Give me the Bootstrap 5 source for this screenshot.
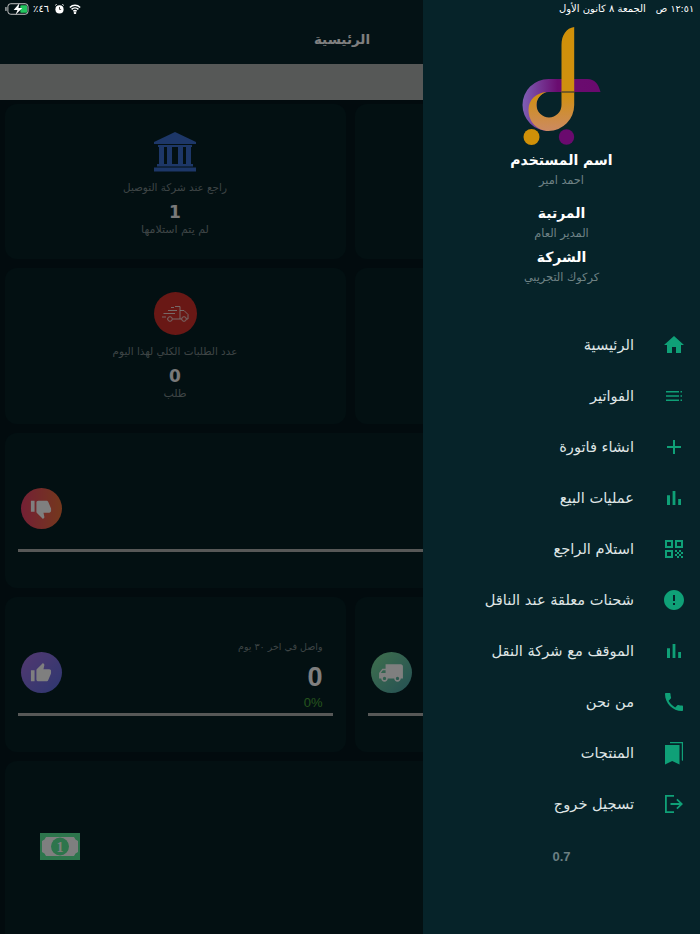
<!DOCTYPE html>
<html lang="ar" dir="rtl">
<head>
  <meta charset="UTF-8" />
  <meta name="viewport" content="width=device-width, initial-scale=1.0"/>
  <title>الرئيسية</title>
  <link href="https://cdn.jsdelivr.net/npm/bootstrap@5.3.0/dist/css/bootstrap.min.css" rel="stylesheet" />
  <style>
    html, body { height: 100%; }
    body {
      width: 700px;
      height: 934px;
      overflow: hidden;
      position: relative;
      background-color: #04171c;
      font-family: "DejaVu Sans", sans-serif;
    }
    .page-title {
      height: 64px;
      background-color: #08242a;
      color: #fff;
      font-size: 13.5px;
      font-weight: 700;
      padding: 29px 16px 0 0;
      line-height: 20px;
      text-align: center;
    }
    .search-strip { height: 36px; background-color: #adb0ae; }
    .stat-rows { --bs-gutter-y: 9px; margin: -5px 0 0; }
    .stat-rows > * { padding: 0 4.5px; }
    .tile {
      background-color: #062025;
      border-radius: 12px;
      height: 155.25px;
      text-align: center;
    }
    .tile-tall { height: 190px; padding-bottom: 20px; }
    .tile-label { font-size: 10.4px; line-height: 14px; color: #7d8a8b; }
    .tile-num { font-size: 17px; font-weight: 700; line-height: 22px; color: #f2f2f2; margin-top: 7px; }
    .tile-sub { font-size: 11px; line-height: 14px; color: #7d8a8b; }
    .bank-box { padding-top: 28px; height: 76px; }
    .truck-box { padding-top: 24px; height: 76px; }
    .round-ico {
      width: 41px;
      height: 41px;
      border-radius: 50%;
      flex: none;
    }
    .round-lg { width: 43px; height: 43px; }
    .bg-red { background-color: #d2302b; }
    .bg-down { background: linear-gradient(90deg, #e8406a, #e8703a); }
    .bg-up { background: linear-gradient(135deg, #a672e0, #5a6ee0); }
    .bg-ship { background: linear-gradient(135deg, #7ee09a, #4aa0a8); }
    .metric-body { height: 84px; padding: 0 10px 0 3px; margin-top: 34px; box-sizing: content-box; }
    .metric-wrap { padding: 0 13px; text-align: right; overflow: hidden; }
    .metric-text { margin-top: 5px; }
    .metric-label { font-size: 9.5px; line-height: 14px; color: #7d8a8b; }
    .metric-num { font-family: "Liberation Sans", sans-serif; font-size: 27px; font-weight: 700; line-height: 34px; color: #fff; margin-top: 6px; }
    .metric-pct { font-family: "Liberation Sans", sans-serif; font-size: 13px; line-height: 16px; color: #4ca83a; margin-top: 1px; }
    .metric-bar { height: 3px; background-color: #aeb0ae; margin-top: -2px; }
    .bill-ico { margin: auto 0 auto 0; margin-left: 35px; }
    .dim-layer { position: absolute; inset: 0; background-color: rgba(0, 0, 0, .5); }
    .side-panel {
      position: absolute;
      top: 0;
      right: 0;
      bottom: 0;
      width: 277px;
      background-color: #062329;
      padding-top: 20px;
      text-align: center;
    }
    .who-title { font-size: 14px; font-weight: 700; line-height: 20px; color: #fff; }
    .who-sub { font-size: 11.3px; line-height: 16px; color: #6f8285; margin-top: 3px; }
    .who-gap-lg { margin-top: 14px; }
    .who-gap-sm { margin-top: 5px; }
    .side-menu { margin-top: 33px; }
    .side-link {
      height: 51.1px;
      padding: 0 14px 0 0;
      color: #dfe5e5;
      font-size: 14.6px;
      gap: 28px;
    }
    .side-link:hover { color: #fff; }
    .side-link svg { width: 24px; height: 24px; flex: none; fill: #0fa077; }
    .build-no { font-family: "Liberation Sans", sans-serif; font-size: 13px; font-weight: 700; line-height: 20px; color: #6b7f82; margin-top: 17px; }
    .status-row {
      position: absolute;
      top: 0;
      left: 0;
      right: 0;
      height: 18px;
      padding: 0 6px 0 5px;
      color: #fff;
      font-size: 10px;
      line-height: 18px;
    }
    .status-date { gap: 10px; }
    .status-time { font-size: 9.5px; }
    .status-icons { gap: 4px; }
    .status-alarm { margin-left: 2px; }
    .status-wifi { margin-left: 1px; }
  </style>
</head>
<body>
  <div class="page-title">الرئيسية</div>
  <div class="search-strip"></div>

  <div class="row stat-rows">
    <div class="col-6"><div class="tile"></div></div>
    <div class="col-6">
      <div class="tile">
        <div class="bank-box">
          <svg width="44" height="40" viewBox="0 0 44 40" fill="#3a6fd0">
            <path d="M22 0 43 10v2H1v-2z"/><rect x="5" y="13" width="34" height="2"/>
            <rect x="6" y="15" width="5" height="17"/><rect x="14" y="15" width="5" height="17"/><rect x="25" y="15" width="5" height="17"/><rect x="33" y="15" width="5" height="17"/>
            <rect x="4" y="32" width="36" height="2.5"/><rect x="1" y="35.5" width="42" height="4"/>
          </svg>
        </div>
        <div class="tile-label">راجع عند شركة التوصيل</div>
        <div class="tile-num">1</div>
        <div class="tile-sub">لم يتم استلامها</div>
      </div>
    </div>

    <div class="col-6"><div class="tile"></div></div>
    <div class="col-6">
      <div class="tile">
        <div class="truck-box">
          <div class="round-ico round-lg bg-red d-inline-flex align-items-center justify-content-center">
            <svg width="27" height="16" viewBox="0 0 27 16" fill="none" stroke="#f2e4e2" stroke-width=".9">
              <path d="M13 .5h5V13M18 4.500h4l4 4V13h-1.800M19.700 13h-9M5.800 13H5"/>
              <circle cx="8" cy="13" r="2.300"/><circle cx="22" cy="13" r="2.300"/>
              <path d="M9 1.500h3M6 4.500h9M1.500 7.500H13M0 11h4"/>
            </svg>
          </div>
        </div>
        <div class="tile-label">عدد الطلبات الكلي لهذا اليوم</div>
        <div class="tile-num">0</div>
        <div class="tile-sub">طلب</div>
      </div>
    </div>

    <div class="col-12">
      <div class="tile metric-wrap">
        <div class="metric-body d-flex align-items-center justify-content-end">
          <div class="round-ico bg-down d-flex align-items-center justify-content-center">
            <svg width="22" height="22" viewBox="0 0 24 24" fill="#fff"><path transform="translate(24 0) scale(-1 1)" d="M15 3H6c-.83 0-1.54.5-1.84 1.220l-3.020 7.050c-.09.23-.14.47-.14.730v2c0 1.100.9 2 2 2h6.310l-.95 4.570-.03.32c0 .41.17.79.44 1.060L9.830 23l6.590-6.590c.36-.36.58-.86.58-1.410V5c0-1.100-.9-2-2-2zm4 0v12h4V3h-4z"/></svg>
          </div>
        </div>
        <div class="metric-bar"></div>
      </div>
    </div>

    <div class="col-6">
      <div class="tile metric-wrap">
        <div class="metric-body d-flex align-items-center justify-content-end">
          <div class="round-ico bg-ship d-flex align-items-center justify-content-center">
            <svg width="26" height="26" viewBox="0 0 24 24" fill="#fff"><path transform="translate(24 0) scale(-1 1)" d="M20 8h-3V4H3c-1.100 0-2 .9-2 2v11h2c0 1.660 1.340 3 3 3s3-1.340 3-3h6c0 1.660 1.340 3 3 3s3-1.340 3-3h2v-5l-3-4zM6 18.500c-.83 0-1.500-.67-1.500-1.500s.67-1.500 1.500-1.500 1.500.67 1.500 1.500-.67 1.500-1.500 1.500zm13.500-9 1.960 2.500H17V9.500h2.500zM18 18.500c-.83 0-1.500-.67-1.500-1.500s.67-1.500 1.500-1.500 1.500.67 1.500 1.500-.67 1.500-1.500 1.500z"/></svg>
          </div>
        </div>
        <div class="metric-bar"></div>
      </div>
    </div>
    <div class="col-6">
      <div class="tile metric-wrap">
        <div class="metric-body d-flex align-items-center justify-content-between">
          <div class="metric-text">
            <div class="metric-label">واصل في اخر ٣٠ يوم</div>
            <div class="metric-num">0</div>
            <div class="metric-pct" dir="ltr">0%</div>
          </div>
          <div class="round-ico bg-up d-flex align-items-center justify-content-center">
            <svg width="22" height="22" viewBox="0 0 24 24" fill="#fff"><path d="M1 21h4V9H1v12zm22-11c0-1.100-.9-2-2-2h-6.310l.95-4.570.03-.32c0-.41-.17-.79-.44-1.060L14.170 1 7.590 7.590C7.220 7.950 7 8.450 7 9v10c0 1.100.9 2 2 2h9c.83 0 1.540-.5 1.800-1.220l3.020-7.050c.08-.23.13-.47.13-.73v-2z"/></svg>
          </div>
        </div>
        <div class="metric-bar"></div>
      </div>
    </div>

    <div class="col-12">
      <div class="tile tile-tall d-flex justify-content-end">
        <svg class="bill-ico" width="40" height="27" viewBox="0 0 40 27">
          <rect width="40" height="27" fill="#5aea98"/>
          <path d="M6 4h28l1.500 2.500L38 8v11l-2.500 1.500L34 23H6l-1.500-2.500L2 19V8l2.500-1.500z" fill="#fff"/>
          <circle cx="20" cy="13.500" r="9" fill="#5aea98"/>
          <text x="20" y="18.500" text-anchor="middle" font-family="Liberation Serif" font-weight="700" font-size="14" fill="#fff">1</text>
        </svg>
      </div>
    </div>
  </div>

  <div class="dim-layer"></div>

  <aside class="side-panel">
    <svg class="d-block mx-auto" width="100" height="130" viewBox="511.500 20 100 130">
      <defs>
        <linearGradient id="logoPurple" x1="0" x2="1" y1="0" y2="0">
          <stop offset="0" stop-color="#7f5fb5"/><stop offset=".45" stop-color="#6a0c70"/><stop offset="1" stop-color="#6a0a6e"/>
        </linearGradient>
        <linearGradient id="logoGold" x1="0" x2="0" y1="0" y2="1">
          <stop offset="0" stop-color="#d09008"/><stop offset=".65" stop-color="#d09010"/><stop offset="1" stop-color="#cc8a62"/>
        </linearGradient>
      </defs>
      <path d="M600 92C598 84 594 79 587 79H548A26 26 0 0 0 548 131V118A12.500 12.500 0 0 1 536 105A12.500 12.500 0 0 1 548 92z" fill="url(#logoPurple)"/>
      <path d="M573.700 27C566 28 561 35 561 45V105A12.500 12.500 0 0 1 536 105C536 99 540 94 546 92C536 93 528 99 528 110C528 122 537 131 548 131A26 26 0 0 0 573.700 105z" fill="url(#logoGold)"/>
      <path d="M561 92h13" stroke="#3a3a30" stroke-width="1.200"/>
      <circle cx="531" cy="137" r="8" fill="#d09008"/>
      <circle cx="566" cy="137" r="7.700" fill="#6a0a6e"/>
    </svg>
    <div class="who-title">اسم المستخدم</div>
    <div class="who-sub">احمد امير</div>
    <div class="who-title who-gap-lg">المرتبة</div>
    <div class="who-sub">المدير العام</div>
    <div class="who-title who-gap-sm">الشركة</div>
    <div class="who-sub">كركوك التجريبي</div>

    <nav class="nav flex-column side-menu">
      <a class="nav-link side-link d-flex align-items-center" href="#">
        <svg viewBox="0 0 24 24"><path d="M10 20v-6h4v6h5v-8h3L12 3 2 12h3v8z"/></svg>الرئيسية</a>
      <a class="nav-link side-link d-flex align-items-center" href="#">
        <svg viewBox="0 0 24 24"><path d="M4 7h13v1.500H4zM4 11.200h13v1.500H4zM4 15.500h13v1.500H4zM18.500 7h1.500v1.500h-1.500zM18.500 11.200h1.500v1.500h-1.500zM18.500 15.500h1.500v1.500h-1.500z"/></svg>الفواتير</a>
      <a class="nav-link side-link d-flex align-items-center" href="#">
        <svg viewBox="0 0 24 24"><path d="M19 13h-6v6h-2v-6H5v-2h6V5h2v6h6v2z"/></svg>انشاء فاتورة</a>
      <a class="nav-link side-link d-flex align-items-center" href="#">
        <svg viewBox="0 0 24 24"><path d="M5 9.200h3V19H5zM10.600 5h2.800v14h-2.800zm5.600 8H19v6h-2.800z"/></svg>عمليات البيع</a>
      <a class="nav-link side-link d-flex align-items-center" href="#">
        <svg viewBox="0 0 24 24"><path d="M3 3h8v8H3zm2 2v4h4V5zM13 3h8v8h-8zm2 2v4h4V5zM3 13h8v8H3zm2 2v4h4v-4zM13 13h2v2h-2zM17 13h2v2h-2zM15 15h2v2h-2zM19 15h2v2h-2zM13 17h2v2h-2zM17 17h2v2h-2zM15 19h2v2h-2zM19 19h2v2h-2z"/></svg>استلام الراجع</a>
      <a class="nav-link side-link d-flex align-items-center" href="#">
        <svg viewBox="0 0 24 24"><path d="M12 2C6.480 2 2 6.480 2 12s4.480 10 10 10 10-4.480 10-10S17.520 2 12 2zm1 15h-2v-2h2v2zm0-4h-2V7h2v6z"/></svg>شحنات معلقة عند الناقل</a>
      <a class="nav-link side-link d-flex align-items-center" href="#">
        <svg viewBox="0 0 24 24"><path d="M5 9.200h3V19H5zM10.600 5h2.800v14h-2.800zm5.600 8H19v6h-2.800z"/></svg>الموقف مع شركة النقل</a>
      <a class="nav-link side-link d-flex align-items-center" href="#">
        <svg viewBox="0 0 24 24"><path d="M6.620 10.790c1.440 2.830 3.760 5.140 6.590 6.590l2.200-2.200c.27-.27.67-.36 1.020-.24 1.120.37 2.330.57 3.570.57.55 0 1 .45 1 1V20c0 .55-.45 1-1 1-9.390 0-17-7.610-17-17 0-.55.45-1 1-1h3.500c.55 0 1 .45 1 1 0 1.250.2 2.450.57 3.570.11.35.03.74-.25 1.020l-2.200 2.200z"/></svg>من نحن</a>
      <a class="nav-link side-link d-flex align-items-center" href="#">
        <svg viewBox="0 0 24 24"><path d="M8 1h13v19l-1.200-.7V2.200H8zM3 4h14.500v19.500L10.200 20 3 23.500z"/></svg>المنتجات</a>
      <a class="nav-link side-link d-flex align-items-center" href="#">
        <svg viewBox="0 0 24 24"><path d="M3 3h9v1.800H4.800v14.400H12V21H3zM15.500 6.800 21 12l-5.500 5.200-1.200-1.300 3.100-3H8.500v-1.800h8.900l-3.100-3z"/></svg>تسجيل خروج</a>
    </nav>
    <div class="build-no">0.7</div>
  </aside>

  <div class="status-row d-flex justify-content-between align-items-center">
    <div class="d-flex align-items-center status-date">
      <span class="status-time">١٢:٥١ ص</span>
      <span>الجمعة ٨ كانون الأول</span>
    </div>
    <div class="d-flex align-items-center status-icons" dir="ltr">
      <svg width="24" height="12" viewBox="0 0 25 12">
        <path d="M1 4v4" stroke="#fff" stroke-width="1"/>
        <rect x="3" y=".5" width="21" height="11" rx="3" fill="none" stroke="#ccc"/>
        <rect x="16" y="2" width="7" height="8" rx="1" fill="#22c55e"/>
        <path d="M15 0 9 7h4l-2 5 7-7h-4z" fill="#fff"/>
      </svg>
      <span>٪٤٦</span>
      <svg class="status-alarm" width="9" height="10" viewBox="0 0 11 12"><circle cx="5.500" cy="6.500" r="5" fill="#fff"/><path d="M5.500 3.500v3h2" stroke="#222" fill="none"/><path d="M0 2 2 0M11 2 9 0" stroke="#fff" stroke-width="1.200"/></svg>
      <svg class="status-wifi" width="12" height="10" viewBox="0 0 14 11" fill="none" stroke="#fff" stroke-width="1.800"><path d="M1 3.800C4.500.3 9.500.3 13 3.800M3 6c2.300-2.200 5.700-2.200 8 0M5 8.100c1.200-1 2.800-1 4 0"/><circle cx="7" cy="10" r=".6"/></svg>
    </div>
  </div>

  <script src="https://cdn.jsdelivr.net/npm/bootstrap@5.3.0/dist/js/bootstrap.bundle.min.js"></script>
</body>
</html>
